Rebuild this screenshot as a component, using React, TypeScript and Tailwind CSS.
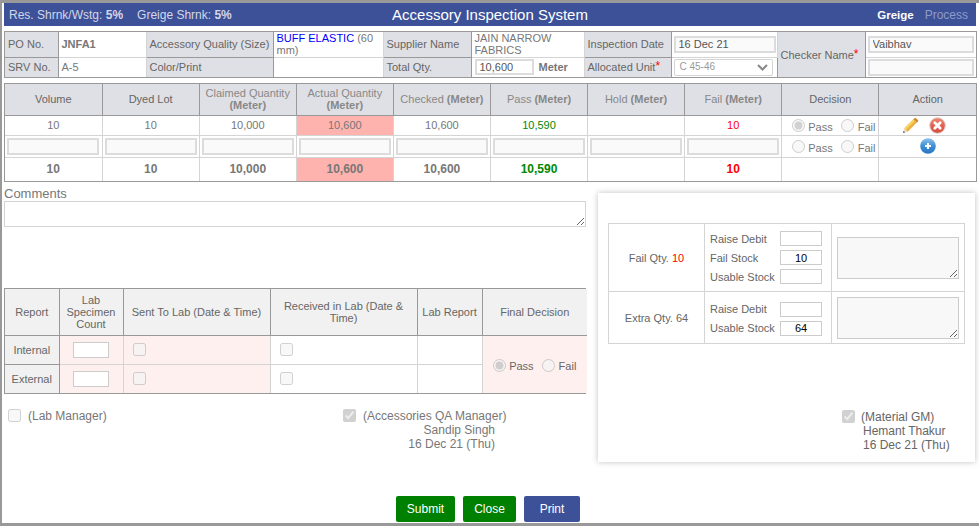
import React from "react";

const Pencil = () => (
  <svg width="17" height="17" viewBox="0 0 18 18" className="inline-block align-middle">
    <path d="M1 17 L2.5 12 L6 15.5 Z" fill="#ecdcc0" />
    <path d="M1 17 L1.7 14.6 L3.4 16.3 Z" fill="#666" />
    <path d="M2.5 12 L12 2.5 L15.5 6 L6 15.5 Z" fill="#eeb040" />
    <path d="M2.5 12 L12 2.5 L13.6 4.1 L4.1 13.6 Z" fill="#f8d468" />
    <path d="M12 2.5 L13.5 1 Q14 0.6 14.6 1 L17 3.4 Q17.4 4 17 4.5 L15.5 6 Z" fill="#cf8a34" />
  </svg>
);

const RedX = () => (
  <svg width="17" height="17" viewBox="0 0 17 17" className="inline-block align-middle">
    <defs>
      <linearGradient id="rx" x1="0" y1="0" x2="0" y2="1">
        <stop offset="0" stopColor="#ee8a78" />
        <stop offset="0.5" stopColor="#e5604e" />
        <stop offset="1" stopColor="#d84a3c" />
      </linearGradient>
    </defs>
    <circle cx="8.5" cy="8.5" r="7.8" fill="url(#rx)" stroke="#d8d0c8" strokeWidth="1" />
    <path d="M5.8 5.8 L11.2 11.2 M11.2 5.8 L5.8 11.2" stroke="#fff" strokeWidth="2.8" strokeLinecap="round" />
  </svg>
);

const BluePlus = () => (
  <svg width="16" height="16" viewBox="0 0 16 16" className="inline-block align-middle">
    <defs>
      <linearGradient id="bp" x1="0" y1="0" x2="0" y2="1">
        <stop offset="0" stopColor="#8fc2ea" />
        <stop offset="0.5" stopColor="#3d8fd8" />
        <stop offset="1" stopColor="#2a74c0" />
      </linearGradient>
    </defs>
    <circle cx="8" cy="8" r="7.8" fill="url(#bp)" />
    <path d="M5 8 H11 M8 5 V11" stroke="#fff" strokeWidth="2" />
  </svg>
);

const Radio = ({ checked = false }: { checked?: boolean }) => (
  <input type="radio" disabled defaultChecked={checked} className="m-0 w-[13px] h-[13px] shrink-0" />
);

const Check = ({ checked = false, className = "" }: { checked?: boolean; className?: string }) => (
  <input type="checkbox" disabled defaultChecked={checked} className={`m-0 w-[13px] h-[13px] shrink-0 ${className}`} />
);

const PassFail = ({ checked = false }: { checked?: boolean }) => (
  <div className="flex items-center pl-[10px]">
    <Radio checked={checked} />
    <span className="ml-[3px] mr-[8px] mt-[3px]">Pass</span>
    <Radio />
    <span className="ml-[4px] mt-[3px]">Fail</span>
  </div>
);

const Box = ({ value = "", className = "" }: { value?: string; className?: string }) => (
  <input
    readOnly
    value={value}
    className={`block border-2 border-[#dcdcdc] bg-[#fafafa] px-[3px] text-[11px] text-[#555] outline-none ${className}`}
  />
);

const Star = () => <sup className="text-[#f00] text-[12px] leading-[0] relative top-[-1px]">*</sup>;

const L = "bg-[#dfe0e5] border border-[#999] px-[3px] py-0 text-[#666]";
const V = "border border-[#d4d4d4] px-[3px] py-0";
const I = "border border-[#d4d4d4] pl-[2px] pr-0 py-0";
const Unit = () => <b className="font-bold">(Meter)</b>;

const heads: React.ReactNode[] = [
  <span className="text-[#666]">Volume</span>,
  <span className="text-[#666]">Dyed Lot</span>,
  <span>Claimed Quantity<br /><Unit /></span>,
  <span>Actual Quantity<br /><Unit /></span>,
  <span>Checked <Unit /></span>,
  <span>Pass <Unit /></span>,
  <span>Hold <Unit /></span>,
  <span>Fail <Unit /></span>,
  <span className="text-[#666]">Decision</span>,
  <span className="text-[#666]">Action</span>,
];

const R = "border border-[#d4d4d4] text-center p-0";

export default function App() {
  return (
    <div
      className="w-[979px] h-[526px] overflow-hidden bg-white border-t-[3px] border-b-[3px] border-l-2 border-[#999] flex flex-col text-[11px] leading-[14px] text-[#777]"
      style={{ fontFamily: '"Liberation Sans", Arial, sans-serif' }}
    >
      {/* Header */}
      <header className="ml-[2px] mr-[3px] h-[23px] shrink-0 bg-[#3d5199] flex items-center text-[12px] text-[#d3d7e8] pl-[5px] pr-[8px]">
        <div className="flex-1 flex gap-[14px]">
          <span>Res. Shrnk/Wstg: <b>5%</b></span>
          <span>Greige Shrnk: <b>5%</b></span>
        </div>
        <div className="text-white text-[15px] ml-[3px]">Accessory Inspection System</div>
        <div className="flex-1 flex justify-end gap-[11px]">
          <b className="text-white text-[11.5px]">Greige</b>
          <span className="text-[#8f9bc6]">Process</span>
        </div>
      </header>

      {/* Info table */}
      <div className="ml-[2px] mr-[2px] mt-[5px] border border-[#999] shrink-0">
        <table className="w-full table-fixed border-collapse border-hidden">
          <colgroup>
            <col className="w-[53px]" /><col className="w-[88px]" /><col className="w-[127px]" /><col className="w-[110px]" /><col className="w-[88px]" />
            <col className="w-[113px]" /><col className="w-[87px]" /><col className="w-[106px]" /><col className="w-[88px]" /><col className="w-[111px]" />
          </colgroup>
          <tbody>
            <tr className="h-[25px]">
              <td className={L}>PO No.</td>
              <td className={V}><b>JNFA1</b></td>
              <td className={L}>Accessory Quality (Size)</td>
              <td className={`${V} leading-[12px]`}><span className="text-[#00f]">BUFF ELASTIC</span> (60 mm)</td>
              <td className={L}>Supplier Name</td>
              <td className={`${V} leading-[12px]`}>JAIN NARROW FABRICS</td>
              <td className={L}>Inspection Date</td>
              <td className={I}><Box value="16 Dec 21" className="w-[102px] h-[17px]" /></td>
              <td rowSpan={2} className={L}>Checker Name<Star /></td>
              <td className={I}><Box value="Vaibhav" className="w-[106px] h-[17px]" /></td>
            </tr>
            <tr className="h-[20px]">
              <td className={L}>SRV No.</td>
              <td className={V}>A-5</td>
              <td className={L}>Color/Print</td>
              <td className={V}></td>
              <td className={L}>Total Qty.</td>
              <td className={V}>
                <div className="flex items-center gap-[5px]">
                  <input readOnly value="10,600" className="w-[59px] h-[16px] border-2 border-[#dcdcdc] bg-white px-[3px] text-[11px] text-[#555] outline-none" />
                  <b>Meter</b>
                </div>
              </td>
              <td className={L}>Allocated Unit<Star /></td>
              <td className={I}>
                <div className="w-[99px] h-[17px] border border-[#d4d4d4] rounded-[2px] flex items-center justify-between pl-[5px] pr-[4px] text-[10px] text-[#999]">
                  C 45-46
                  <svg width="11" height="7" viewBox="0 0 11 7"><path d="M1 1 L5.5 5.5 L10 1" fill="none" stroke="#888" strokeWidth="2" /></svg>
                </div>
              </td>
              <td className={I}><Box className="w-[106px] h-[17px]" /></td>
            </tr>
          </tbody>
        </table>
      </div>

      {/* Quantity table */}
      <div className="ml-[2px] mr-[2px] mt-[5px] border border-[#999] shrink-0">
        <table className="w-full table-fixed border-collapse border-hidden">
          <tbody>
            <tr className="h-[31px]">
              {heads.map((h, i) => (
                <th key={i} className="bg-[#dfe0e5] border border-[#999] font-normal text-[#888] text-center leading-[12px] p-0">{h}</th>
              ))}
            </tr>
            <tr className="h-[20px]">
              <td className={R}>10</td>
              <td className={R}>10</td>
              <td className={R}>10,000</td>
              <td className={`${R} bg-[#ffb3ae]`}>10,600</td>
              <td className={R}>10,600</td>
              <td className={`${R} text-[#080]`}>10,590</td>
              <td className={R}></td>
              <td className={`${R} text-[#f00]`}>10</td>
              <td className={R}><PassFail checked /></td>
              <td className={R}>
                <div className="flex items-center justify-center gap-[10px] pr-[8px]"><Pencil /><RedX /></div>
              </td>
            </tr>
            <tr className="h-[22px]">
              {Array.from({ length: 8 }).map((_, i) => (
                <td key={i} className={R}><Box className="w-[92px] h-[17px] mx-auto" /></td>
              ))}
              <td className={R}><PassFail /></td>
              <td className={R}><BluePlus /></td>
            </tr>
            <tr className="h-[24px] font-bold text-[12px]">
              <td className={R}>10</td>
              <td className={R}>10</td>
              <td className={R}>10,000</td>
              <td className={`${R} bg-[#ffb3ae]`}>10,600</td>
              <td className={R}>10,600</td>
              <td className={`${R} text-[#080]`}>10,590</td>
              <td className={R}></td>
              <td className={`${R} text-[#f00]`}>10</td>
              <td className={R}></td>
              <td className={R}></td>
            </tr>
          </tbody>
        </table>
      </div>

      {/* Lower part */}
      <div className="flex flex-1 min-h-0">
        <div className="ml-[2px] w-[582px] shrink-0">
          <div className="text-[13px] leading-[14px] mt-[5px]">Comments</div>
          <textarea readOnly className="block w-full h-[26px] border border-[#d4d4d4] outline-none" />

          <div className="mt-[61px] border border-[#999]">
            <table className="w-full table-fixed border-collapse border-hidden text-[#666]">
              <colgroup>
                <col className="w-[54px]" /><col className="w-[64px]" /><col className="w-[147px]" /><col className="w-[147px]" /><col className="w-[65px]" /><col className="w-[105px]" />
              </colgroup>
              <tbody>
                <tr className="h-[46px]">
                  {["Report", "Lab Specimen Count", "Sent To Lab (Date & Time)", "Received in Lab (Date & Time)", "Lab Report", "Final Decision"].map((t) => (
                    <th key={t} className="bg-[#f1f1f1] border border-[#999] font-normal text-center leading-[12px] px-[2px] py-0">{t}</th>
                  ))}
                </tr>
                <tr className="h-[29px]">
                  <td className="bg-[#f1f1f1] border border-[#999] text-center">Internal</td>
                  <td className="bg-[#fff0f0] border border-[#d4d4d4]"><input readOnly className="block mx-auto w-[36px] h-[16px] bg-white border border-[#ccc] outline-none" /></td>
                  <td className="bg-[#fff0f0] border border-[#d4d4d4] pl-[9px]"><Check className="mt-[3px]" /></td>
                  <td className="border border-[#d4d4d4] pl-[9px]"><Check className="mt-[3px]" /></td>
                  <td className="border border-[#d4d4d4]"></td>
                  <td rowSpan={2} className="bg-[#fff0f0] border border-[#d4d4d4]">
                    <div className="flex items-center justify-center pt-[3px]">
                      <Radio checked />
                      <span className="ml-[3px] mr-[8px]">Pass</span>
                      <Radio />
                      <span className="ml-[4px]">Fail</span>
                    </div>
                  </td>
                </tr>
                <tr className="h-[29px]">
                  <td className="bg-[#f1f1f1] border border-[#999] text-center">External</td>
                  <td className="bg-[#fff0f0] border border-[#d4d4d4]"><input readOnly className="block mx-auto w-[36px] h-[16px] bg-white border border-[#ccc] outline-none" /></td>
                  <td className="bg-[#fff0f0] border border-[#d4d4d4] pl-[9px]"><Check className="mt-[3px]" /></td>
                  <td className="border border-[#d4d4d4] pl-[9px]"><Check className="mt-[3px]" /></td>
                  <td className="border border-[#d4d4d4]"></td>
                </tr>
              </tbody>
            </table>
          </div>

          <div className="flex mt-[15px] text-[12px]">
            <div className="w-[339px] pl-[4px] flex gap-[7px] items-start">
              <Check />
              <span>(Lab Manager)</span>
            </div>
            <div className="w-[163px]">
              <div className="flex gap-[7px] items-start whitespace-nowrap"><Check checked /><span>(Accessories QA Manager)</span></div>
              <div className="text-right pr-[11px]">Sandip Singh</div>
              <div className="text-right pr-[11px]">16 Dec 21 (Thu)</div>
            </div>
          </div>
        </div>

        <aside className="ml-[12px] mt-[11px] w-[377px] h-[269px] shrink-0 bg-white shadow-[0_0_6px_rgba(0,0,0,0.25)] pt-[30px] px-[10px]">
          <table className="w-full table-fixed border-collapse text-[#666]">
            <colgroup>
              <col className="w-[96px]" /><col className="w-[127px]" /><col />
            </colgroup>
            <tbody>
              <tr className="h-[68px]">
                <td className="border border-[#d4d4d4] text-center p-0">Fail Qty. <span className="text-[#f00]">10</span></td>
                <td className="border border-[#d4d4d4] pl-[5px] pr-[9px] py-0">
                  <div className="flex flex-col gap-[4px]">
                    <div className="flex justify-between items-center">Raise Debit<input readOnly className="w-[42px] h-[15px] border border-[#ccc] outline-none" /></div>
                    <div className="flex justify-between items-center">Fail Stock<input readOnly value="10" className="w-[42px] h-[15px] border border-[#ccc] outline-none text-center text-[11px] text-black" /></div>
                    <div className="flex justify-between items-center">Usable Stock<input readOnly className="w-[42px] h-[15px] border border-[#ccc] outline-none" /></div>
                  </div>
                </td>
                <td className="border border-[#d4d4d4] px-[5px] py-0">
                  <textarea readOnly className="block w-[122px] h-[42px] bg-[#f8f8f8] border border-[#ccc] outline-none" />
                </td>
              </tr>
              <tr className="h-[52px]">
                <td className="border border-[#d4d4d4] text-center p-0">Extra Qty. 64</td>
                <td className="border border-[#d4d4d4] pl-[5px] pr-[9px] py-0">
                  <div className="flex flex-col gap-[4px] pt-[2px]">
                    <div className="flex justify-between items-center">Raise Debit<input readOnly className="w-[42px] h-[15px] border border-[#ccc] outline-none" /></div>
                    <div className="flex justify-between items-center">Usable Stock<input readOnly value="64" className="w-[42px] h-[15px] border border-[#ccc] outline-none text-center text-[11px] text-black" /></div>
                  </div>
                </td>
                <td className="border border-[#d4d4d4] px-[5px] py-0">
                  <textarea readOnly className="block w-[122px] h-[42px] bg-[#f8f8f8] border border-[#ccc] outline-none" />
                </td>
              </tr>
            </tbody>
          </table>
          <div className="mt-[66px] ml-[234px] w-[120px] text-[12px] text-[#666]">
            <div className="flex gap-[6px] items-start"><Check checked /><span>(Material GM)</span></div>
            <div className="pl-[21px]">Hemant Thakur</div>
            <div className="pl-[21px]">16 Dec 21 (Thu)</div>
          </div>
        </aside>
      </div>

      {/* Buttons */}
      <div className="flex justify-center gap-[8px] pr-[5px] mb-[1px] shrink-0">
        <button className="w-[59px] h-[26px] rounded-[2px] bg-[#008000] text-white text-[12px]">Submit</button>
        <button className="w-[53px] h-[26px] rounded-[2px] bg-[#008000] text-white text-[12px]">Close</button>
        <button className="w-[56px] h-[26px] rounded-[2px] bg-[#3d5199] text-white text-[12px]">Print</button>
      </div>
    </div>
  );
}
